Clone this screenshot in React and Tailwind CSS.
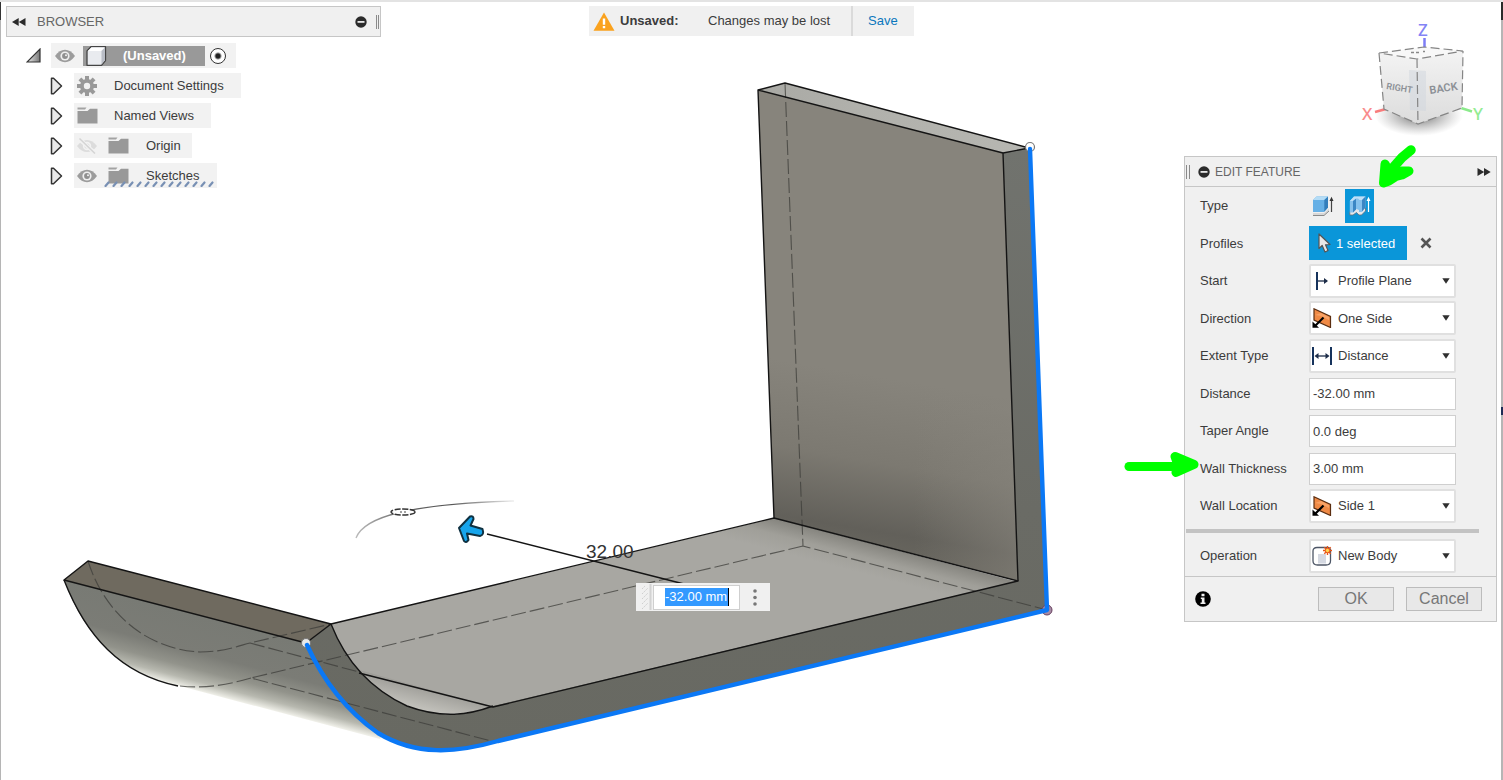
import React from "react";

const CollapseDot = () => (
  <svg viewBox="0 0 12 12" className="h-3 w-3" aria-hidden="true">
    <circle cx="6" cy="6" r="5.7" fill="#2b2b2b" />
    <rect x="2.5" y="5" width="7" height="1.8" fill="#e8e8e8" />
  </svg>
);

const Eye = () => (
  <svg viewBox="0 0 20 14" className="h-[14px] w-5 shrink-0" aria-hidden="true">
    <path d="M0 7 Q4.500 .8 10 .8 T20 7 Q15.500 13.200 10 13.200 T0 7Z" fill="#9c9c9c" />
    <circle cx="10" cy="7" r="4.600" fill="#efefef" />
    <circle cx="10" cy="7" r="2.900" fill="#8f8f8f" />
    <circle cx="11" cy="6.200" r="1" fill="#efefef" />
  </svg>
);

const EyeOff = () => (
  <svg viewBox="0 0 20 16" className="h-4 w-5 shrink-0" aria-hidden="true">
    <path d="M0 8 Q4.500 2 10 2 T20 8 Q15.500 14 10 14 T0 8Z" fill="#dcdcdc" />
    <circle cx="10" cy="8" r="4.200" fill="#f2f2f2" />
    <circle cx="10" cy="8" r="2.600" fill="#dcdcdc" />
    <path d="M1 0 L19 16" stroke="#f2f2f2" strokeWidth="4" />
    <path d="M2.500 .5 L18 15.500" stroke="#d4d4d4" strokeWidth="1.500" />
  </svg>
);

const Folder = () => (
  <svg viewBox="0 0 21 17" className="h-[17px] w-[21px] shrink-0" aria-hidden="true">
    <path d="M.5 4 H10.500 L13 1.800 H20.500 V16.500 H.5Z" fill="#999" />
    <path d="M.5 .5 H9.500 L8 2.500 H.5Z" fill="#a3a3a3" />
  </svg>
);

const Gear = () => (
  <svg viewBox="-10 -10 20 20" className="h-5 w-5 shrink-0" aria-hidden="true">
    {[0, 45, 90, 135].map((a) => (
      <rect key={a} x="-2" y="-10" width="4" height="20" fill="#999" transform={`rotate(${a})`} />
    ))}
    <circle r="7" fill="#999" />
    <circle r="3.200" fill="#f2f2f2" />
  </svg>
);

const Component = () => (
  <svg viewBox="0 0 21 20" className="h-5 w-[21px] shrink-0" aria-hidden="true">
    <path d="M1 5 L5 .7 H19.500 V14.500 L15.500 19.300 H1Z" fill="#e9ebef" stroke="#444" strokeWidth="1.300" strokeLinejoin="round" />
    <path d="M1.800 5 L5.400 1.400 H18.700 L15.200 5Z" fill="#fff" />
    <path d="M15.500 5 L19 1.600 V14.300 L15.500 18.600Z" fill="#b9bdc6" />
  </svg>
);

const Expander = () => (
  <svg viewBox="0 0 13 18" className="h-[18px] w-[13px]" aria-hidden="true">
    <path d="M1.500 1.200 H3.500 L11.500 9 L3.500 16.800 H1.500Z" fill="#e9e9e9" stroke="#333" strokeWidth="1.500" strokeLinejoin="round" />
  </svg>
);

const pill = "flex h-[25px] items-center bg-[#f2f2f2]";

function TreeRow({ name, children }) {
  return (
    <li className="flex items-center gap-[11px] pl-[44px]">
      <button type="button" aria-label={"Expand " + name} className="flex">
        <Expander />
      </button>
      {children}
    </li>
  );
}

function Browser() {
  return (
    <aside className="ml-1.5 w-[375px] text-[13px]">
      <header className="flex h-[31px] items-center border border-[#c6c6c6] bg-[#f0f0f0] pl-[5px] text-[#666]">
        <button type="button" aria-label="Collapse browser" className="flex">
          <svg viewBox="0 0 14 8" className="h-2 w-[14px]" aria-hidden="true">
            <path d="M6.700 0 V8 L0 4Z M13.500 0 V8 L6.800 4Z" fill="#2b2b2b" />
          </svg>
        </button>
        <h2 className="ml-[11px] flex-1">BROWSER</h2>
        <button type="button" aria-label="Minimise browser" className="mr-[9px] flex">
          <CollapseDot />
        </button>
        <div className="mr-px flex h-3.5 w-[3px] border-x border-[#8a8a8a]" />
      </header>
      <ul className="flex flex-col gap-[5px] pt-1.5 text-[#3c3c3c]">
        <li className="flex items-center gap-[10px] pl-5">
          <button type="button" aria-label="Collapse document" className="flex">
            <svg viewBox="0 0 15 15" className="h-[15px] w-[15px]" aria-hidden="true">
              <defs>
                <linearGradient id="tri">
                  <stop offset="0" stopColor="#eee" />
                  <stop offset="1" stopColor="#777" />
                </linearGradient>
              </defs>
              <path d="M14 1 V14 H1Z" fill="url(#tri)" stroke="#333" strokeWidth="1.200" />
            </svg>
          </button>
          <div className={pill + " w-[185px] gap-2 pl-1"}>
            <Eye />
            <span className="flex h-5 w-[122px] items-center gap-4 bg-[#999] pl-[3px] font-bold text-white">
              <Component />
              (Unsaved)
            </span>
            <input type="radio" defaultChecked aria-label="Activate component" className="-ml-[3px] h-4 w-4 appearance-none rounded-full border-[1.5px] border-[#333] bg-[radial-gradient(circle,#222_0_2px,#fff_4px)]" />
          </div>
        </li>
        <TreeRow name="Document Settings">
          <div className={pill + " w-[167px] gap-[17px] pl-[3px]"}>
            <Gear />
            Document Settings
          </div>
        </TreeRow>
        <TreeRow name="Named Views">
          <div className={pill + " w-[137px] gap-4 pl-[3px]"}>
            <Folder />
            Named Views
          </div>
        </TreeRow>
        <TreeRow name="Origin">
          <div className={pill + " w-[118px] pl-[3px]"}>
            <EyeOff />
            <span className="ml-[11px] flex items-center gap-[17px]">
              <Folder />
              Origin
            </span>
          </div>
        </TreeRow>
        <TreeRow name="Sketches">
          <div className={pill + " relative w-[143px] pl-[3px]"}>
            <Eye />
            <span className="ml-[11px] flex items-center gap-[17px]">
              <Folder />
              Sketches
            </span>
            <svg viewBox="0 0 112 6" className="absolute bottom-px left-[30px] h-1.5 w-28" aria-hidden="true">
              {Array.from({ length: 14 }, (_, i) => (
                <path key={i} d={`M${i * 8 + 1.5} 5 L${i * 8 + 4.5} 1.500`} stroke="#7890b4" strokeWidth="2.200" strokeLinecap="round" />
              ))}
            </svg>
          </div>
        </TreeRow>
      </ul>
    </aside>
  );
}

function UnsavedBanner() {
  return (
    <div role="status" className="flex h-[30px] w-[325px] items-center bg-[#f0f0f0] pl-1 text-[13px] text-[#3c3c3c]">
      <svg viewBox="0 0 22 19" className="h-[19px] w-[22px]" aria-hidden="true">
        <path d="M11 .5 L21.500 18.800 H.5Z" fill="#faa21e" />
        <path d="M9.800 6.500 H12.200 V12.800 H9.800Z M9.800 14 H12.200 V16.200 H9.800Z" fill="#fff" />
      </svg>
      <strong className="ml-[5px] w-[88px]">Unsaved:</strong>
      <span className="flex-1">Changes may be lost</span>
      <a href="#save" className="flex h-full w-[63px] items-center border-l-2 border-[#dadada] pl-[15px] text-[#0b77bd]">
        Save
      </a>
    </div>
  );
}

function ViewCube() {
  return (
    <svg viewBox="1355 16 132 128" className="mr-2.5 h-32 w-[132px]" role="img" aria-label="View cube">
      <defs>
        <radialGradient id="shadow">
          <stop offset="0" stopColor="#444" stopOpacity=".85" />
          <stop offset=".5" stopColor="#777" stopOpacity=".45" />
          <stop offset="1" stopColor="#999" stopOpacity="0" />
        </radialGradient>
        <linearGradient id="faceL" x1="0" y1="0" x2="0" y2="1">
          <stop offset="0" stopColor="#f3f3f3" />
          <stop offset="1" stopColor="#dcdcdc" />
        </linearGradient>
      </defs>
      <ellipse cx="1419" cy="115" rx="44" ry="21" fill="url(#shadow)" />
      <path d="M1375 112 L1386 109" stroke="#f87c7c" strokeWidth="2.500" />
      <path d="M1461 108 L1472 111.500" stroke="#8bea8b" strokeWidth="2.500" />
      <path d="M1424.500 38 V47" stroke="#7d7df5" strokeWidth="2.500" />
      <path d="M1379 53 L1417 59 L1418 124 L1384 109Z" fill="url(#faceL)" />
      <path d="M1417 59 L1463 51 L1462 108 L1418 124Z" fill="url(#faceL)" />
      <path d="M1379 53 L1424 47 L1463 51 L1417 59Z" fill="#f8f8f8" />
      <path d="M1409 70 L1426 71 V111 L1410 110Z" fill="#cfd6dd" opacity=".5" />
      <path d="M1379 53 L1424 47 L1463 51 L1417 59Z M1379 53 L1384 109 L1418 124 L1462 108 L1463 51 M1417 59 L1418 124" fill="none" stroke="#858585" strokeWidth="1.200" strokeDasharray="9 4" />
      <path d="M1411 52.500 h3 m2 0 h3 m4 -1 h2" stroke="#888" strokeWidth="1.500" />
      <g fontFamily="Roboto, sans-serif" fill="#8c9096">
        <text x="1386" y="89" fontSize="9" fontWeight="600" transform="rotate(9 1386 89)">RIGHT</text>
        <text x="1430" y="94" fontSize="11" fontWeight="600" transform="rotate(-9 1430 94)">BACK</text>
      </g>
      <g fontFamily="'Noto Sans', sans-serif" fontSize="17" fontWeight="500">
        <text x="1418" y="36" fill="#8484f5">Z</text>
        <text x="1362" y="120" fill="#f98b8b">X</text>
        <text x="1473" y="120" fill="#93ec93">Y</text>
      </g>
    </svg>
  );
}

const ProfilePlaneIcon = () => (
  <svg viewBox="0 0 20 20" className="h-5 w-5" aria-hidden="true">
    <path d="M5 1 V19" stroke="#16335c" strokeWidth="2" />
    <path d="M6 10 H15" stroke="#1c2c48" strokeWidth="1.300" />
    <path d="M12 7 L16 10 L12 13Z" fill="#1c2c48" />
  </svg>
);

const DistanceIcon = () => (
  <svg viewBox="0 0 20 20" className="h-5 w-5" aria-hidden="true">
    <path d="M1 1 V19 M19 1 V19" stroke="#16335c" strokeWidth="2" />
    <path d="M4 10 H16" stroke="#1c2c48" strokeWidth="1.300" />
    <path d="M6.500 7 L2.500 10 L6.500 13Z M13.500 7 L17.500 10 L13.500 13Z" fill="#1c2c48" />
  </svg>
);

const SideIcon = () => (
  <svg viewBox="0 0 20 20" className="h-5 w-5" aria-hidden="true">
    <path d="M2 .8 L18.500 8.500 V19.500 L2 12Z" fill="#f08a45" stroke="#5a2d10" strokeWidth="1.200" />
    <path d="M3 7 L9 5 L17 9 V12 L9 8Z" fill="#ffb27c" opacity=".6" />
    <path d="M11.500 9.500 L3 18" stroke="#000" strokeWidth="2.200" />
    <path d="M.5 19.800 V13.500 L7 19.800Z" fill="#000" />
  </svg>
);

const NewBodyIcon = () => (
  <svg viewBox="0 0 20 20" className="h-5 w-5" aria-hidden="true">
    <path d="M1 5 Q1 1.500 5 1.500 H15 Q18.500 1.500 18.500 5 V15 Q18.500 19 14 19 H5.500 Q1 19 1 15Z" fill="#fff" stroke="#4d5666" strokeWidth="1.300" />
    <path d="M6 8 H14 V17.500 H6Z" fill="#d5d9e2" />
    <g stroke="#e8551a" strokeWidth="1.400">
      <path d="M15.500 0 V9 M11 4.500 H20 M12.300 1.300 L18.700 7.700 M18.700 1.300 L12.300 7.700" />
    </g>
    <circle cx="15.500" cy="4.500" r="2.200" fill="#ffd84f" stroke="#e8551a" />
  </svg>
);

function Field({ id, label, children }) {
  return (
    <div className="grid grid-cols-[109px_1fr] items-center pl-[15px]">
      <label htmlFor={id}>{label}</label>
      {children}
    </div>
  );
}

function SelectField({ id, label, icon, value, options }) {
  return (
    <Field id={id} label={label}>
      <div className="relative flex w-[147px] items-center">
        <select id={id} defaultValue={value} className="h-[34px] w-full appearance-none rounded-[2px] border-2 border-[#e0e0e0] bg-white pl-[27px] text-[13px] text-[#3c3c3c]">
          {options.map((o) => (
            <option key={o}>{o}</option>
          ))}
        </select>
        <span className="pointer-events-none absolute left-[3px]">{icon}</span>
        <svg viewBox="0 0 8 6" className="pointer-events-none absolute right-1.5 h-1.5 w-2" aria-hidden="true">
          <path d="M.3 .3 H7.700 L4 5.700Z" fill="#2f2f2f" />
        </svg>
      </div>
    </Field>
  );
}

function TextField({ id, label, value }) {
  return (
    <Field id={id} label={label}>
      <input id={id} defaultValue={value} className="h-8 w-[147px] border border-[#cfcfcf] bg-white pl-[3px] text-[#3c3c3c]" />
    </Field>
  );
}

function EditFeature() {
  return (
    <section className="relative w-[313px] border border-[#c6c6c6] bg-[#f0f0f0] text-[13px] text-[#3c3c3c]" aria-label="Edit feature">
      <header className="flex h-[30px] items-center border-b border-[#c6c6c6] pl-px text-[12px] text-[#666]">
        <div className="h-3.5 w-1 border-x border-[#8a8a8a]" />
        <button type="button" aria-label="Minimise panel" className="ml-2 flex">
          <CollapseDot />
        </button>
        <h2 className="ml-[5px] flex-1">EDIT FEATURE</h2>
        <button type="button" aria-label="Dock panel" className="mr-[5px] flex">
          <svg viewBox="0 0 14 8" className="h-2 w-[14px]" aria-hidden="true">
            <path d="M.5 0 V8 L7.200 4Z M7 0 V8 L13.700 4Z" fill="#2b2b2b" />
          </svg>
        </button>
      </header>

      <form onSubmit={(e) => e.preventDefault()}>
        <div className="grid h-[338px] auto-rows-fr">
          <Field id="type-solid" label="Type">
            <div className="flex gap-2">
              <button id="type-solid" type="button" aria-label="Extrude" className="flex h-[34px] w-7 items-center justify-center">
                <svg viewBox="0 0 22 22" className="h-[22px] w-[22px]" aria-hidden="true">
                  <path d="M1 17 V20.500 H12 L17 16 V13.500 L12 18 H1Z" fill="#d8d8d8" />
                  <path d="M1 20.500 H12 L17 16" fill="none" stroke="#8a8a8a" />
                  <path d="M1 5 L4.500 1.500 H16 V12.500 L12 17 H1Z" fill="#66b0e6" />
                  <path d="M1 5 L4.500 1.500 H16 L12.300 5Z" fill="#b4dcf6" />
                  <path d="M12.300 5 L16 1.500 V12.500 L12.300 16.800Z" fill="#337ebb" />
                  <path d="M19.500 17 V4" stroke="#444" strokeWidth="1.200" />
                  <path d="M17.500 6 L19.500 1.800 L21.500 6Z" fill="#333" />
                </svg>
              </button>
              <button type="button" aria-label="Thin extrude" aria-pressed="true" className="flex h-[34px] w-[29px] items-center justify-center bg-[#0a96d9]">
                <svg viewBox="0 0 22 22" className="h-[22px] w-[22px]" aria-hidden="true">
                  <path d="M.8 17 V20 H4 L7.500 17.500 L10 20 H12.500 L16.500 16 V13 H4Z" fill="#e4e8ec" stroke="#5f6f7c" strokeWidth=".8" />
                  <path d="M.8 6 L5 1.500 H16.500 V12.500 L12.800 17 H10 V15 L7.500 14 L4 17.500 H.8Z" fill="#86c1ed" />
                  <path d="M.8 6 L5 1.500 H16.500 L13 5 H10.500 L9 3.500 H7 L4 6Z" fill="#bfe0f8" />
                  <path d="M4 6 L7 3.800 V14.500 L4 17.500Z M13 5 L16.500 1.500 V12.500 L13 16.500Z" fill="#3b86c4" />
                  <path d="M19.500 17 V4" stroke="#fff" strokeWidth="1.200" />
                  <path d="M17.500 6 L19.500 1.800 L21.500 6Z" fill="#fff" />
                </svg>
              </button>
            </div>
          </Field>
          <Field id="profiles" label="Profiles">
            <div className="flex items-center gap-[13px]">
              <button id="profiles" type="button" className="flex h-[34px] w-[98px] items-center gap-[5px] bg-[#0a96d9] pl-[9px] text-white">
                <svg viewBox="0 0 13 20" className="h-5 w-[13px]" aria-hidden="true">
                  <path d="M1 1 V15.500 L4.200 12.500 L7 19 L10 17.500 L7.500 11.800 L12 11.500Z" fill="#e8e8e8" stroke="#555" strokeWidth="1.200" strokeLinejoin="round" />
                </svg>
                1 selected
              </button>
              <button type="button" aria-label="Clear selection" className="flex">
                <svg viewBox="0 0 12 12" className="h-3 w-3" aria-hidden="true">
                  <path d="M1.500 1.500 L10.500 10.500 M10.500 1.500 L1.500 10.500" stroke="#555" strokeWidth="2.600" />
                </svg>
              </button>
            </div>
          </Field>
          <SelectField id="start" label="Start" icon={<ProfilePlaneIcon />} value="Profile Plane" options={["Profile Plane", "Offset", "Object"]} />
          <SelectField id="direction" label="Direction" icon={<SideIcon />} value="One Side" options={["One Side", "Two Sides", "Symmetric"]} />
          <SelectField id="extent" label="Extent Type" icon={<DistanceIcon />} value="Distance" options={["Distance", "To Object", "All"]} />
          <TextField id="distance" label="Distance" value="-32.00 mm" />
          <TextField id="taper" label="Taper Angle" value="0.0 deg" />
          <TextField id="thickness" label="Wall Thickness" value="3.00 mm" />
          <SelectField id="location" label="Wall Location" icon={<SideIcon />} value="Side 1" options={["Side 1", "Side 2", "Center"]} />
        </div>
        <hr className="mt-1 mr-[17px] ml-px border-0 border-t-4 border-[#c3c3c3]" />
        <div className="pt-1.5 pb-[3px]">
          <SelectField id="operation" label="Operation" icon={<NewBodyIcon />} value="New Body" options={["New Body", "Join", "Cut"]} />
        </div>
        <footer className="flex h-[45px] items-center gap-3 border-t border-[#c6c6c6] pr-[14px] pl-2.5 text-[16px] text-[#777]">
          <button type="button" aria-label="Information" className="mr-auto flex">
            <svg viewBox="0 0 16 16" className="h-4 w-4" aria-hidden="true">
              <circle cx="8" cy="8" r="7.800" fill="#000" />
              <path d="M6.500 2.800 H9.500 V5.300 H6.500Z M5.800 6.500 H9.500 V11.500 H10.500 V13 H5.500 V11.500 H6.800 V8 H5.800Z" fill="#f0f0f0" />
            </svg>
          </button>
          <button type="submit" className="h-6 w-[76px] border border-[#bcbcbc] bg-[#e8e8e8] leading-5">OK</button>
          <button type="button" className="h-6 w-[76px] border border-[#bcbcbc] bg-[#e8e8e8] leading-5">Cancel</button>
        </footer>
      </form>

      <svg viewBox="0 0 40 48" className="pointer-events-none absolute -top-[15px] left-[191px] h-12 w-10" aria-hidden="true">
        <g stroke="#0f0" strokeLinecap="round" strokeLinejoin="round" fill="#0f0">
          <path d="M35 8 L26 15.500 L15 28" strokeWidth="9.500" />
          <path d="M9 22 L7.500 41 L13 39 L20 34.500 L26 33 L33 29 L26 29 L14 31Z" strokeWidth="9" />
        </g>
      </svg>
      <svg viewBox="0 0 76 28" className="pointer-events-none absolute top-[294px] -left-[62px] h-7 w-[76px]" aria-hidden="true">
        <g stroke="#0f0" strokeLinecap="round" strokeLinejoin="round" fill="#0f0">
          <path d="M6 15.500 H55" strokeWidth="9" />
          <path d="M52 5.500 L71 13.500 L53 21.500 L55 14Z" strokeWidth="9" />
        </g>
      </svg>
    </section>
  );
}

const outerCurve = "C322 678 344 709 378 733 C416 756 456 753 498 741";
const innerCurve = "C344 657 368 688 407 706 C442 719 469 715 493 706";

function Model() {
  return (
    <svg viewBox="0 0 1503 780" className="absolute inset-0 h-full w-full" role="img" aria-label="Bracket model">
      <defs>
        <linearGradient id="wall" gradientUnits="userSpaceOnUse" x1="900" y1="380" x2="872" y2="548">
          <stop offset="0" stopColor="#87847c" />
          <stop offset=".5" stopColor="#7c7971" />
          <stop offset=".9" stopColor="#62605a" />
          <stop offset="1" stopColor="#66645d" />
        </linearGradient>
        <linearGradient id="wallLight" x1="0" x2="1">
          <stop offset=".6" stopColor="#87847c" stopOpacity="0" />
          <stop offset="1" stopColor="#87847c" stopOpacity=".55" />
        </linearGradient>
        <linearGradient id="wallTop">
          <stop offset="0" stopColor="#a9a9a4" />
          <stop offset=".4" stopColor="#b1b1ac" />
          <stop offset="1" stopColor="#b6b6b1" />
        </linearGradient>
        <linearGradient id="side" x1="0" y1="0" x2="0" y2="1">
          <stop offset="0" stopColor="#71736e" />
          <stop offset=".6" stopColor="#6a6b65" />
          <stop offset="1" stopColor="#686962" />
        </linearGradient>
        <linearGradient id="floor" gradientUnits="userSpaceOnUse" x1="896" y1="549" x2="888" y2="580">
          <stop offset="0" stopColor="#84837d" />
          <stop offset=".5" stopColor="#a09f99" />
          <stop offset="1" stopColor="#a8a7a2" />
        </linearGradient>
        <linearGradient id="bend" gradientUnits="userSpaceOnUse" x1="64" y1="580" x2="45.500" y2="650.600">
          <stop offset="0" stopColor="#787a74" />
          <stop offset=".5" stopColor="#7b7c76" />
          <stop offset=".72" stopColor="#92938b" />
          <stop offset=".88" stopColor="#b7b8af" />
          <stop offset="1" stopColor="#eeeee7" />
        </linearGradient>
        <linearGradient id="innerBend" gradientUnits="userSpaceOnUse" x1="425" y1="686" x2="418" y2="714">
          <stop offset="0" stopColor="#9c9b96" />
          <stop offset="1" stopColor="#cbcac4" />
        </linearGradient>
        <linearGradient id="arc">
          <stop offset="0" stopColor="#bbb" />
          <stop offset=".3" stopColor="#666" />
          <stop offset=".6" stopColor="#555" />
          <stop offset="1" stopColor="#eee" />
        </linearGradient>
      </defs>

      <path d="M64 580 C86 640 125 676 180 686 L380 739 L400 700 L306 643Z" fill="url(#bend)" />
      <path d="M88 561 L331 624 L306 643 L64 580Z" fill="#6f6a5f" />
      <path d="M331 624 L774 518 L1018 582 L493 707 L359 673 L336 650Z" fill="url(#floor)" />
      <path d="M352 668 L493 707 C465 716 430 716 400 706 C380 698 362 685 352 668Z" fill="url(#innerBend)" />
      <path d="M758 90 L1003 153 L1018 581 L774 518Z" fill="url(#wall)" />
      <path d="M758 90 L1003 153 L1018 581 L774 518Z" fill="url(#wallLight)" />
      <path d="M758 90 L785 83 L1029 148 L1003 153Z" fill="url(#wallTop)" />
      <path d={`M306 643 ${outerCurve} L1047 610 L1029 148 L1003 153 L1018 581 L493 706 C469 715 442 719 407 706 C368 688 344 657 331 624Z`} fill="url(#side)" />

      <g fill="none" stroke="#3d3d3a" strokeWidth="1.100" opacity=".75" strokeDasharray="15 4">
        <path d="M785 83 L803 546 L1047 610" />
        <path d="M803 546 L251 678 L495 742" />
        <path d="M88 561 C104 612 145 649 200 652 C223 652 238 646 250 643 L331 624" />
        <path d="M250 643 L359 672" />
        <path d="M180 686 C207 689 230 684 251 678" />
      </g>
      <g fill="none" stroke="#141414" strokeWidth="1.400" strokeLinejoin="round">
        <path d="M331 624 L88 561 L64 580 L306 643 L331 624 L774 518 L1018 581 L493 707 L359 673" />
        <path d="M64 580 C86 636 120 674 178 686" />
        <path d={`M331 624 ${innerCurve}`} />
        <path d="M774 518 L758 90 L785 83 L1029 148 L1003 153 L758 90 M1003 153 L1018 581" />
        <path d="M487 534 L684 584" />
      </g>

      <circle cx="1047" cy="610" r="5" fill="#a78ba5" stroke="#66405e" />
      <circle cx="1030" cy="147" r="4.500" fill="#fff" stroke="#777" strokeWidth="1.200" />
      <circle cx="306" cy="643" r="4.500" fill="#e8e8e8" stroke="#777" />
      <path d={`M307 645 ${outerCurve} L1047 610 L1030 149`} fill="none" stroke="#0b78f5" strokeWidth="4.400" strokeLinecap="round" strokeLinejoin="round" />

      <path d="M356 538 C364 517 408 504 514 501" fill="none" stroke="url(#arc)" strokeWidth="1.300" />
      <ellipse cx="403" cy="512" rx="12" ry="3" fill="#fff" stroke="#333" strokeWidth="1.500" strokeDasharray="6 1.500" />
      <path d="M400 512 h2 m2 0 h2" stroke="#444" />
      <path d="M459 528 L470 516.500 Q473.500 515.500 473.500 519 L470.500 525.500 L482.500 529 Q484.500 535 480 536 L467 533.500 L468.500 540 Q466 543.500 464 541Z" fill="#16a5ec" stroke="#0f3141" strokeWidth="2" strokeLinejoin="round" />
      <text x="586" y="558" fontFamily="'Liberation Sans', Arial, sans-serif" fontSize="19" fill="#333">32.00</text>
    </svg>
  );
}

function Manipulator() {
  return (
    <div className="absolute top-[583px] left-[636px] flex h-7 w-[134px] items-center bg-[#f0f0f0] text-[13px]">
      <svg viewBox="0 0 13 26" className="ml-1 h-[26px] w-[13px]" aria-hidden="true">
        <path d="M2 5 l3 -3 M2 10 l6 -6 M2 15 l6 -6 M2 20 l6 -6 M2 25 l6 -6" stroke="#cfcfcf" strokeDasharray="2 1" />
        <path d="M10.500 0 V26" stroke="#d3d3d3" strokeWidth="2" />
      </svg>
      <div className="flex h-[25px] w-[87px] items-center border border-[#cfcfcf] bg-white pl-[11px]">
        <input aria-label="Distance value" defaultValue="-32.00 mm" className="h-[18px] w-16 border-r border-black bg-[#3399ff] text-white outline-none" />
      </div>
      <button type="button" aria-label="More options" className="ml-[13px] flex">
        <svg viewBox="0 0 4 17" className="h-[17px] w-1" aria-hidden="true">
          <g fill="#777">
            <circle cx="2" cy="2" r="1.800" />
            <circle cx="2" cy="8.500" r="1.800" />
            <circle cx="2" cy="15" r="1.800" />
          </g>
        </svg>
      </button>
    </div>
  );
}

export default function App() {
  return (
    <main className="relative min-h-screen overflow-hidden border-t-2 border-[#e3e3e3] bg-white font-['Liberation_Sans',Arial,sans-serif]">
      <div className="absolute inset-x-0 -top-0.5 bottom-0 border-r-2 border-l border-[#b5b5b5]">
        <div className="absolute top-0 -left-px h-5 w-px bg-[#333]" />
        <div className="absolute top-0 -right-0.5 h-5 w-0.5 bg-[#2b2b2b]" />
        <div className="absolute top-[407px] -right-0.5 h-2 w-0.5 bg-[#1d2b55]" />
      </div>
      <div className="absolute inset-x-0 -top-0.5 bottom-0">
        <Model />
        <Manipulator />
      </div>
      <div className="relative grid grid-cols-[1fr_auto_1fr] items-start pt-1">
        <Browser />
        <UnsavedBanner />
        <div className="flex flex-col items-end pt-[10px] pr-1.5 pb-4">
          <ViewCube />
          <div className="mt-3">
            <EditFeature />
          </div>
        </div>
      </div>
    </main>
  );
}
